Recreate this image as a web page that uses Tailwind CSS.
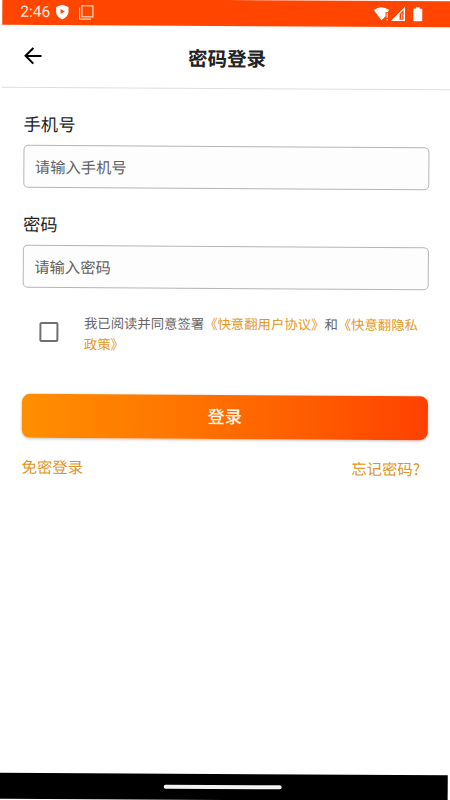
<!DOCTYPE html>
<html lang="zh-CN">
<head>
<meta charset="utf-8">
<title>密码登录</title>
<script src="https://cdn.jsdelivr.net/npm/@tailwindcss/browser@4"></script>
</head>
<body class="w-[450px] h-[800px] overflow-hidden bg-white">
<div class="w-[450px] h-[800px] rotate-[0.34deg] flex flex-col bg-white font-['Roboto','Noto_Sans_CJK_SC',sans-serif] text-[#222]">
  <div class="h-[26px] shrink-0 bg-[#ff4500] flex items-center pl-[18px] pr-[29px] text-[#ffe9d6]">
    <span class="text-[15.500px] leading-[26px] w-[36px] whitespace-nowrap">2:46</span>
    <svg class="w-[14px] h-[16px] -ml-px" viewBox="0 0 14 16"><path d="M7 .6 13.200 3v4.800c0 3.600-2.600 6-6.200 7.600C3.400 13.800.8 11.400.8 7.800V3Z" fill="#fff"/><path d="M5.300 4.900v5.200l4.300-2.600Z" fill="#ff4500"/></svg>
    <svg class="w-[16px] h-[16px] ml-[9px]" viewBox="0 0 16 16" fill="none" stroke="#ffdcc0" stroke-width="1.200"><rect x="3.600" y="1.600" width="11" height="11"/><path d="M1.300 3.500v11.400h11.400"/></svg>
    <svg class="w-[50px] h-[16px] ml-auto" viewBox="0 0 50 16"><path d="M.5 4Q8 -1.500 15.800 4L14.300 6h-2v4.300L8.200 14.400Z" fill="#fff"/><path d="M13.300 6.800h1.500v5h-1.500zM13.300 13h1.500v1.500h-1.500z" fill="#ffe0c8"/><path d="M19.300 14.300 31 2.300v12Z" fill="none" stroke="#fff" stroke-width="1.400"/><path d="M18.500 14.900 26.300 6.500v8.400Z" fill="#fff"/><path d="M28.500 7.500v5.500" stroke="#ffe0c8" stroke-width="1"/><path d="M40.800 2.500h1.700V1h4v1.500h1.700q.8 0 .8.800v11q0 .8-.8.800h-7.400q-.8 0-.8-.8v-11q0-.8.8-.8Z" fill="#fff"/></svg>
  </div>
  <header class="h-[62.500px] shrink-0 border-b border-[#dedede] grid grid-cols-[60px_1fr_60px] items-center pt-[6px]">
    <svg class="w-[18px] h-[18px] ml-[22px] -mt-[6px]" viewBox="0 0 18 18" fill="none" stroke="#000" stroke-width="2"><path d="M17.500 9H2M9.300 1.200 1.500 9l7.800 7.800"/></svg>
    <h1 class="text-center text-[19.500px] font-bold leading-[28px]">密码登录</h1>
  </header>
  <main class="flex-1 px-[22px] pt-[25px]">
    <label class="block h-[32px] text-[17.300px] leading-[24px]">手机号</label>
    <div class="h-[43.500px] rounded-[5px] border border-[#b5b5b5] bg-[#fdfdfd] pl-[10.500px] text-[15.300px] leading-[44px] text-[#616161]">请输入手机号</div>
    <label class="block mt-[25px] h-[31.500px] text-[17.300px] leading-[24px]">密码</label>
    <div class="h-[43.500px] rounded-[5px] border border-[#b5b5b5] bg-[#fdfdfd] pl-[10.500px] text-[15.300px] leading-[44px] text-[#616161]">请输入密码</div>
    <div class="mt-[24.500px] flex">
      <div class="w-[19.500px] h-[19.500px] ml-[16.500px] mt-[9.500px] border-2 border-[#707070] rounded-[2px] shrink-0"></div>
      <p class="ml-[25.500px] text-[13.370px] leading-[21px] text-[#666] whitespace-nowrap">我已阅读并同意签署<span class="text-[#e6971c]">《快意翻用户协议》</span>和<span class="text-[#e6971c]">《快意翻隐私<br>政策》</span></p>
    </div>
    <button class="mt-[39px] block w-full h-[44px] pt-px rounded-[8px] bg-linear-to-r from-[#ff8f00] to-[#ff4000] shadow-[0_1px_3px_rgba(0,0,0,0.25)] text-[17.300px] font-medium text-[#fff4e6] leading-[24px]">登录</button>
    <div class="mt-[19px] flex justify-between pr-[7.500px] text-[15.400px] leading-[23px] text-[#df9526]"><span>免密登录</span><span class="-mt-[1.500px] font-['Noto_Sans_CJK_SC',sans-serif]">忘记密码?</span></div>
  </main>
  <footer class="h-[26px] shrink-0 bg-black flex justify-center pt-[11px]"><div class="w-[118px] h-[4px] rounded-full bg-[#f2f2f2]"></div></footer>
</div>
</body>
</html>
